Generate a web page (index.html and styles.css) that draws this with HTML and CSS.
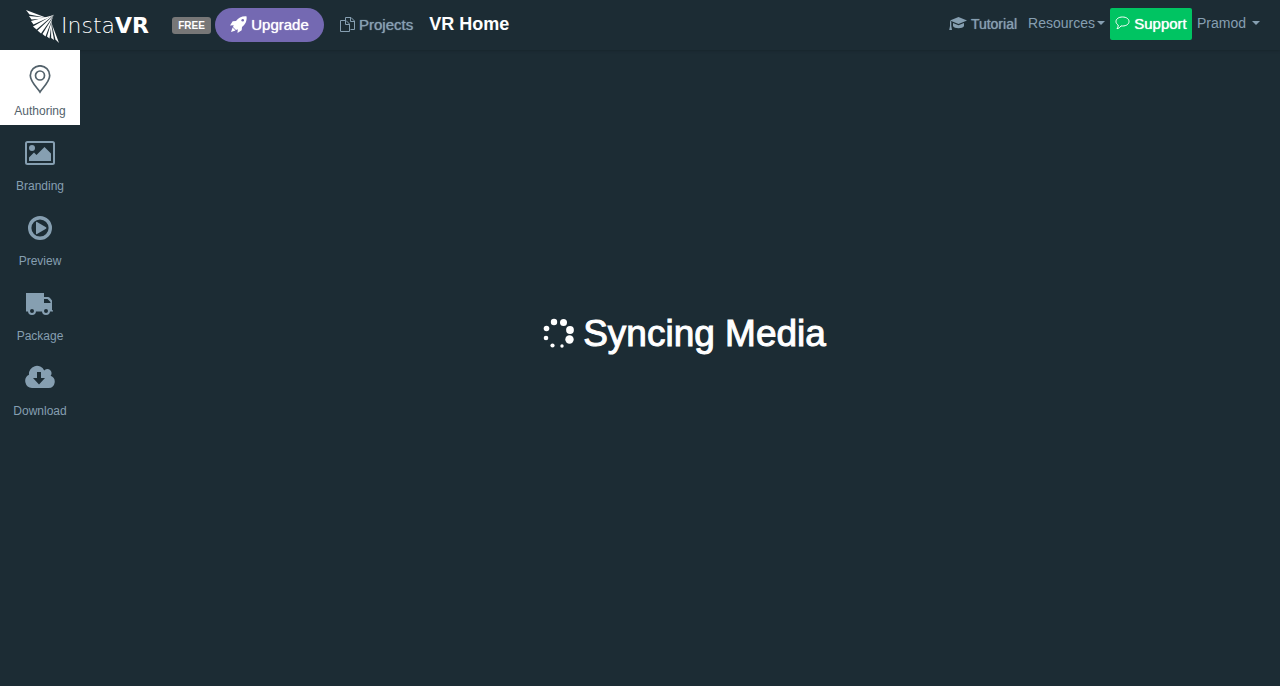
FILE: index.html
```html
<!DOCTYPE html>
<html lang="en">
<head>
<meta charset="utf-8">
<title>InstaVR - VR Home</title>
<link rel="stylesheet" href="styles.css">
</head>
<body>
<header class="topbar">
  <a class="brand" href="#" aria-label="InstaVR">
    <svg class="brand-mark" width="34" height="34" viewBox="0 0 34 34" fill="#fff"><path d="M0 0L21 8L3.500 4.500Z"/><path d="M3 6L24 8L5.500 9.500Z"/><path d="M5 11L28 5L7.500 14.500Z"/><path d="M7 16.500L28 4.500L10.500 19.500Z"/><path d="M11.500 20.500L28 5L15 23.500Z"/><path d="M16.500 24L27 7L19.500 26.500Z"/><path d="M21 26.500L26 10L23.500 28.500Z"/><path d="M25.200 28L25 13L28 30Z"/><path d="M29.500 29.500L25.500 13L33 33Z"/></svg>
    <span class="brand-name">Insta<b>VR</b></span>
  </a>
  <span class="badge">FREE</span>
  <button class="upgrade" type="button">
    <svg width="17" height="17" viewBox="0 0 17 17"><path fill="#fff" d="M16.600.4C11.800 0 8.600 1.800 6 5L2.700 5.300L0 9.500L3.700 9.200L3 11L6 14L7.800 13.300L7.500 17L11.700 14.300L12 11C15.200 8.400 17 5.200 16.600.4ZM2.600 11.500L1 16L5.500 14.400Z"/><circle cx="12.700" cy="4.300" r="1.300" fill="#7469b2"/></svg>
    Upgrade
  </button>
  <a class="projects" href="#">
    <svg width="15" height="15" viewBox="0 0 15 15" fill="none" stroke="currentColor"><path d="M5.500 3.500V.5H11L14.500 4V12.500H10.500M10.500.5V4.500H14.500"/><path d="M.5 3.500H6L9.500 7V14.500H.5ZM5.500 3.500V7.500H9.500"/></svg>
    Projects
  </a>
  <h1 class="title">VR Home</h1>
  <nav class="links" aria-label="Account">
    <a class="tutorial" href="#">
      <svg width="18" height="14" viewBox="0 0 18 14" fill="currentColor"><path d="M9.500 0L18 3.500L9.500 7L1 3.500Z"/><path d="M4 6L9.500 8.300L15 6V9C14 12 5 12 4 9ZM1 4L2.300 4.500V9L3 13H.2L1 9Z"/></svg>
      Tutorial
    </a>
    <button class="menu resources" type="button">Resources<span class="caret"></span></button>
    <button class="support" type="button">
      <svg width="15" height="14" viewBox="0 0 15 14" fill="none" stroke="#fff"><path d="M7.500 1C11.500 1 14 3 14 5.500S11.500 10 7.500 10L6 9.900C5 11.500 3.500 12.500 2 12.700C2.900 11.500 3.200 10.500 3.200 9C1.700 8 1 7 1 5.500C1 3 3.500 1 7.500 1Z"/></svg>
      Support
    </button>
    <button class="menu account" type="button">Pramod<span class="caret"></span></button>
  </nav>
</header>
<div class="workspace">
  <nav class="sidebar" aria-label="Steps">
    <a class="step active" href="#">
      <svg width="30" height="30" viewBox="0 0 30 30" fill="none" stroke="currentColor" stroke-width="1.700"><path d="M15 27C13 23.500 5.300 17 5.300 10.500A9.700 9.700 0 0 1 24.700 10.500C24.700 17 17 23.500 15 27Z"/><circle cx="15" cy="10.500" r="4.500"/></svg>
      Authoring
    </a>
    <a class="step" href="#">
      <svg width="30" height="30" viewBox="0 0 30 30" fill="currentColor"><rect x="1" y="2" width="28" height="22" rx="1.500" fill="none" stroke="currentColor" stroke-width="2"/><circle cx="7" cy="8" r="3"/><path d="M4 21V17.500L9 12.500L11.500 15L19.500 7L26 13.500V21Z"/></svg>
      Branding
    </a>
    <a class="step" href="#">
      <svg width="30" height="30" viewBox="0 0 30 30" fill="currentColor"><circle cx="15" cy="13" r="10.300" fill="none" stroke="currentColor" stroke-width="3.400"/><path d="M11 7.500Q11 6.500 12 7L21 12.300Q22 13 21 13.700L12 19Q11 19.500 11 18.500Z"/></svg>
      Preview
    </a>
    <a class="step" href="#">
      <svg width="30" height="30" viewBox="0 0 30 30" fill="currentColor"><path fill-rule="evenodd" d="M1 3H19V7H23Q24 7 25 8L27 10.500V20L28 20.500V21.500H1ZM19 9V13H25.500V12L22.500 9Z"/><circle cx="7" cy="21" r="3" fill="#1c2c34" stroke="currentColor" stroke-width="2"/><circle cx="21" cy="21" r="3" fill="#1c2c34" stroke="currentColor" stroke-width="2"/></svg>
      Package
    </a>
    <a class="step" href="#">
      <svg width="30" height="30" viewBox="0 0 30 30" fill="currentColor"><path fill-rule="evenodd" d="M7 23A7 7 0 0 1 4 9.800A8 8 0 0 1 19.200 5.500A4 4 0 0 1 25.600 10.800A6.300 6.300 0 0 1 23.700 23ZM12 7V13H8L14 19.500L20 13H16V7Z"/></svg>
      Download
    </a>
  </nav>
  <main class="stage">
    <p class="status" role="status">
      <svg width="32" height="32" viewBox="0 0 32 32" fill="#fff"><circle cx="11" cy="4" r="3.200"/><circle cx="20.500" cy="4.500" r="3.500"/><circle cx="27" cy="12" r="3.900"/><circle cx="26.500" cy="21.500" r="4.200"/><circle cx="19" cy="28" r="1.700"/><circle cx="9.500" cy="27.500" r="2.100"/><circle cx="3" cy="20" r="2.300"/><circle cx="3.500" cy="10.500" r="2.800"/></svg>
      Syncing Media
    </p>
  </main>
</div>
</body>
</html>
```
FILE: styles.css
```css
* { box-sizing: border-box; }
body {
  margin: 0;
  min-height: 100vh;
  display: flex;
  flex-direction: column;
  background: #1c2c34;
  color: #869fb1;
  font: 14px/20px "Liberation Sans", Arial, sans-serif;
}
a { color: inherit; text-decoration: none; }
button { border: 0; background: none; color: inherit; font: inherit; cursor: pointer; }
svg { flex: none; }
.topbar {
  display: flex;
  align-items: flex-start;
  height: 50px;
  padding: 8px 20px 0 26px;
  box-shadow: 0 1px 2px #18262d;
  white-space: nowrap;
}
.brand { display: flex; width: 146px; gap: 1px; padding-top: 2px; color: #fff; }
.brand-name { font: 200 22px/32px "DejaVu Sans", sans-serif; }
.brand-name b { font-weight: 700; }
.badge {
  width: 39px;
  margin: 9px 4px 0 0;
  border-radius: 3px;
  background: #777;
  color: #fff;
  font-size: 10px;
  font-weight: bold;
  line-height: 17px;
  text-align: center;
}
.upgrade, .projects, .tutorial, .support { display: flex; align-items: center; gap: 4px; text-shadow: 0 0 1px currentColor; }
.upgrade {
  justify-content: center;
  width: 109px;
  height: 34px;
  padding: 0;
  border-radius: 17px;
  background: #7469b2;
  color: #fff;
  font-size: 15px;
}
.upgrade svg { margin-bottom: 2px; }
.projects { height: 34px; margin-left: 16px; font-size: 15px; }
.projects svg { margin-bottom: 2px; }
.title { margin: 0 0 0 16px; color: #fff; font-size: 18px; line-height: 32px; }
.links { display: flex; margin-left: auto; }
.tutorial { height: 32px; margin-right: 11px; }
.menu { display: flex; align-items: center; height: 30px; padding: 0; }
.caret { border: 4px solid transparent; border-top-color: currentColor; border-bottom: 0; }
.resources { gap: 2px; margin-right: 5px; }
.account { gap: 6px; }
.support {
  justify-content: center;
  width: 82px;
  height: 32px;
  margin-right: 5px;
  padding: 0;
  border-radius: 2px;
  background: #00c462;
  color: #fff;
  font-size: 15px;
}
.support svg { margin-bottom: 2px; }
.workspace { display: flex; flex: 1; }
.sidebar { width: 80px; }
.step {
  display: flex;
  flex-direction: column;
  align-items: center;
  gap: 6px;
  height: 75px;
  padding-top: 15px;
  font-size: 12px;
}
.active { background: #fff; color: #53626b; }
.stage { display: flex; flex: 1; justify-content: center; padding-top: 262px; }
.status {
  display: flex;
  align-items: center;
  gap: 8px;
  height: 44px;
  margin: 0;
  padding-left: 9px;
  color: #fff;
  font-size: 37px;
  line-height: 44px;
  -webkit-text-stroke: 1px #fff;
}
```
